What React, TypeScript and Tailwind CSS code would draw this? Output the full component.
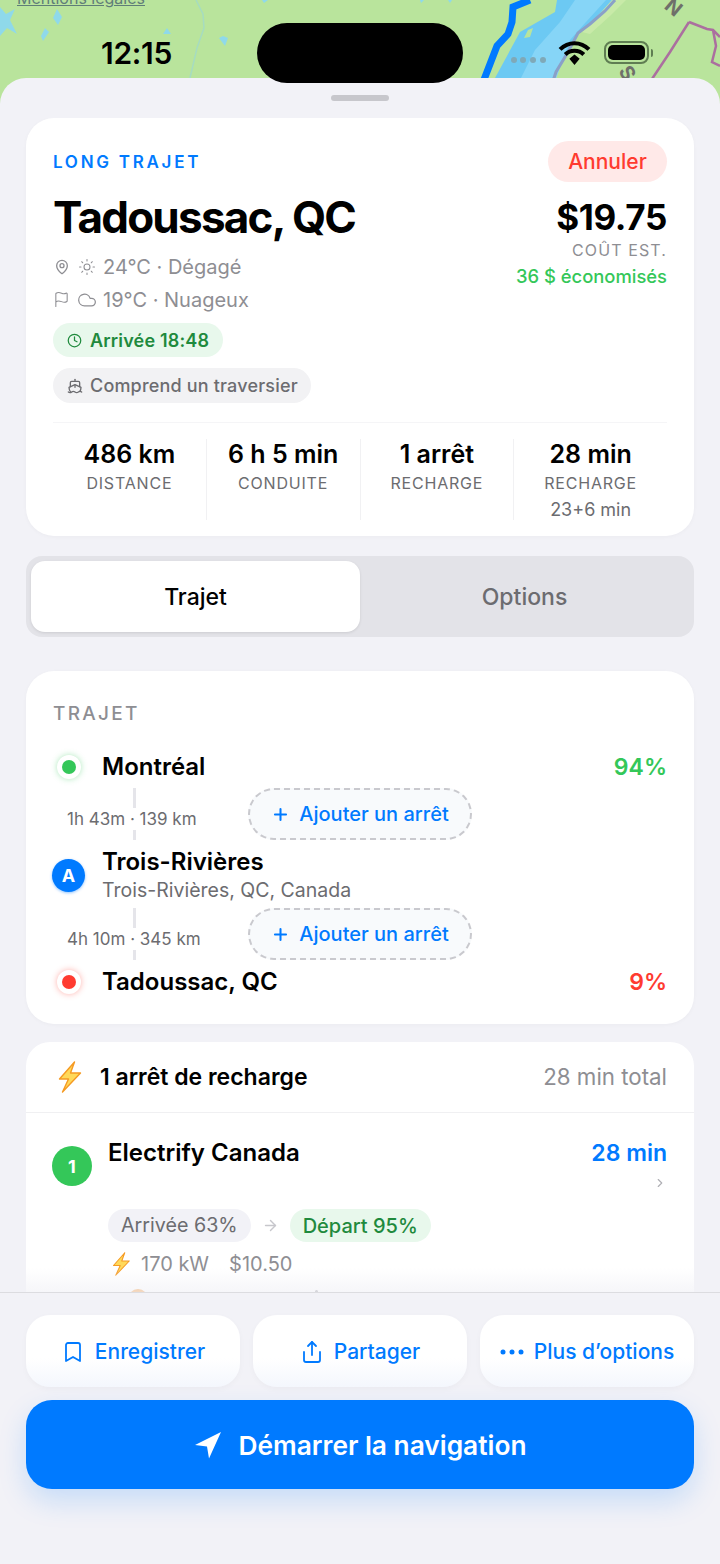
import React from "react";
import { Bookmark, Clock, Cloud, Flag, MapPin, Plus, Share, ChevronRight, ArrowRight, Sun, Ship } from "lucide-react";

const MapBackdrop = () => (
  <svg viewBox="0 0 720 110" className="absolute left-0 top-0 w-[720px] h-[110px]">
    <rect width="720" height="110" fill="#b9e49c" />
    <path d="M0 7 L6 14 L15 9 L10 20 L17 34 L7 28 L0 36Z M57 9 L62 17 L58 25 L53 18Z M45 28 L49 32 L43 41 L41 36Z M167 28 L171 34 L163 34Z M223 36 L228 38 L225 46 L219 38Z M262 0 L268 0 L264 3Z M420 0 L424 0 L421 3Z M448 0 L452 0 L450 3Z" fill="#8fd9ea" />
    <path d="M196 0 L203 14 L204 28 L197 48 L190 78" stroke="#a6dcc0" strokeWidth="1.5" fill="none" />
    <path d="M557 0 H614 L592 22 L578 32 L565 55 L550 90 H485 L495 78 L520 32 L555 12Z" fill="#6cc9f3" />
    <path d="M575 0 H606 L586 22 L570 40 L552 90 H515 L535 50 L560 22Z" fill="#86d5f7" />
    <path d="M533 28 L528 30 L524 38 L530 37Z" fill="#b9e49c" />
    <path d="M612 0 H626 L610 16 L590 34 L582 32 L594 20Z" fill="#c8eaa8" />
    <path d="M615 0 L605 11 L590 24 L578 33 L568 52 L556 72 L550 90" stroke="#8aa0c8" strokeWidth="3" fill="none" />
    <path d="M530 0 L513 7 L512 22 L508 34 L497 46 L480 90" stroke="#007aff" strokeWidth="7" fill="none" />
    <path d="M689 22 L670 52 L650 82 M689 22 L707 29 L713 30 L720 37 M713 30 L716 46 L712 62 L720 66" stroke="#ab6f9f" strokeWidth="2.5" fill="none" />
    <g fill="#7fa9b8">
      <circle cx="514" cy="60" r="3" />
      <circle cx="523" cy="60" r="3" />
      <circle cx="533" cy="60" r="3" />
      <circle cx="543" cy="60" r="3" />
    </g>
    <text x="666" y="14" transform="rotate(40 673 7)" fontFamily="Inter, sans-serif" fontSize="20" fontWeight="700" fill="#6f6f6a">N</text>
    <text x="622" y="80" transform="rotate(60 628 72)" fontFamily="Inter, sans-serif" fontSize="20" fontWeight="700" fill="#6f6f6a">S</text>
  </svg>
);

const Bolt = ({ className }: { className: string }) => (
  <svg viewBox="0 0 24 32" className={className}>
    <path d="M17 1 L2 18 H11 L5 31 L23 12 H13 Z" fill="#ffd95a" stroke="#f59a23" strokeWidth="1.4" strokeLinejoin="round" />
  </svg>
);

const Stat = ({ value, label, sub, last }: { value: string; label: string; sub?: string; last?: boolean }) => (
  <div className={`flex-1 h-[81px] flex flex-col items-center ${last ? "" : "border-r border-[#f1f1f3]"}`}>
    <div className="mt-[1px] text-[25px] leading-[29px] font-semibold text-black">{value}</div>
    <div className="mt-[4px] text-[16px] leading-[20px] tracking-[0.05em] text-[#6c6c70]">{label}</div>
    {sub && <div className="mt-[7px] text-[18px] leading-[20px] text-[#6c6c70]">{sub}</div>}
  </div>
);

const AddStop = () => (
  <button className="w-[224px] h-[52px] rounded-full border-2 border-dashed border-[#c9c9ce] bg-[#f8fafc] flex items-center justify-center gap-[9px] text-[#007aff] text-[20px] font-medium">
    <Plus size={19} strokeWidth={2.6} />
    Ajouter un arrêt
  </button>
);

const Leg = ({ text, className }: { text: string; className: string }) => (
  <div className={`relative flex items-center h-[52px] ml-[14px] ${className}`}>
    <div className="absolute left-[66px] top-0 h-[52px] w-[3px] bg-[#e5e5ea]" />
    <div className="relative w-[181px] pt-[9px]">
      <span className="relative bg-white py-[1px] text-[17px] leading-[20px] text-[#6c6c70]">{text}</span>
    </div>
    <AddStop />
  </div>
);

const RouteDot = ({ dotClass, glowClass }: { dotClass: string; glowClass: string }) => (
  <div className={`ml-[4px] w-[24px] h-[24px] rounded-full bg-white flex items-center justify-center ${glowClass}`}>
    <div className={`w-[14px] h-[14px] rounded-full ${dotClass}`} />
  </div>
);

const ActionBtn = ({ icon, label }: { icon: React.ReactNode; label: string }) => (
  <button className="flex-1 h-[72px] rounded-[24px] bg-gradient-to-b from-white from-60% to-[#f4f7fd] flex items-center justify-center gap-[10px] pt-[2px] text-[#007aff] text-[21px] font-medium shadow-[0_2px_6px_rgba(0,0,0,0.03)]">
    {icon}
    {label}
  </button>
);

export default function App() {
  return (
    <div className="relative w-[720px] h-[1564px] overflow-hidden bg-[#f2f2f7] font-['Inter',sans-serif]">
      <MapBackdrop />
      <div className="absolute left-[17px] top-[-11px] text-[16px] leading-[18px] text-[#5f7d78] underline">Mentions légales</div>

      <div className="relative mt-[78px] h-[1486px] rounded-t-[26px] bg-[#f2f2f7] flex flex-col">
        <div className="h-[40px] flex justify-center pt-[17px] shrink-0">
          <div className="w-[58px] h-[6px] rounded-full bg-[#c7c7cc]" />
        </div>

        <div className="relative flex-1 min-h-0 overflow-hidden px-[26px]">
          <section className="h-[418px] rounded-[28px] bg-white px-[27px] pt-[23px] shadow-[0_1px_4px_rgba(0,0,0,0.03)]">
            <div className="flex justify-between">
              <div>
                <div className="mt-[11px] text-[17px] leading-[20px] font-semibold tracking-[0.16em] text-[#007aff]">LONG TRAJET</div>
                <h1 className="mt-[18px] text-[44px] leading-[54px] font-bold tracking-[-0.04em] text-black">Tadoussac, QC</h1>
                <div className="mt-[6px] flex items-center h-[33px] text-[20px] text-[#8e8e93]">
                  <MapPin size={16} className="ml-[1px] mr-[8px]" />
                  <Sun size={18} strokeWidth={1.4} className="mr-[7px]" />
                  24°C · Dégagé
                </div>
                <div className="flex items-center h-[33px] text-[20px] text-[#8e8e93]">
                  <Flag size={17} strokeWidth={1.5} className="mr-[7px]" />
                  <Cloud size={20} strokeWidth={1.5} className="mr-[6px]" />
                  19°C · Nuageux
                </div>
              </div>
              <div className="flex flex-col items-end">
                <button className="w-[119px] h-[41px] rounded-full bg-[#ffe9e8] text-[#ff3b30] text-[21px] font-medium">Annuler</button>
                <div className="mt-[14px] text-[35px] leading-[42px] font-bold tracking-[-0.01em] text-black">$19.75</div>
                <div className="mt-[2px] text-[16px] leading-[20px] tracking-[0.07em] text-[#8e8e93]">COÛT EST.</div>
                <div className="mt-[5px] text-[18.4px] leading-[22px] font-medium text-[#34c759]">36 $ économisés</div>
              </div>
            </div>
            <div className="mt-[7px] inline-flex items-center gap-[8px] h-[34px] px-[14px] rounded-full bg-[#e8f8ec] text-[18px] font-semibold tracking-[0.01em] text-[#1f8a3d] align-top">
              <Clock size={15} />
              Arrivée 18:48
            </div>
            <div className="mt-[11px]">
              <div className="inline-flex items-center gap-[7px] h-[35px] pl-[14px] pr-[13px] rounded-full bg-[#f2f2f4] text-[18px] font-medium tracking-[0.01em] text-[#6c6c70]">
                <Ship size={16} />
                Comprend un traversier
              </div>
            </div>
            <div className="mt-[19px] border-t border-[#f5f5f7] pt-[16px] flex">
              <Stat value="486 km" label="DISTANCE" />
              <Stat value="6 h 5 min" label="CONDUITE" />
              <Stat value="1 arrêt" label="RECHARGE" />
              <Stat value="28 min" label="RECHARGE" sub="23+6 min" last />
            </div>
          </section>

          <div className="mt-[20px] h-[81px] rounded-[16px] bg-[#e3e3e8] p-[5px] flex">
            <div className="w-[329px] pt-[2px] rounded-[14px] bg-white shadow-[0_1px_3px_rgba(0,0,0,0.1)] flex items-center justify-center text-[23px] font-medium text-black">Trajet</div>
            <div className="flex-1 pt-[2px] flex items-center justify-center text-[23px] font-medium text-[#6c6c70]">Options</div>
          </div>

          <section className="mt-[34px] h-[353px] rounded-[28px] bg-white px-[27px] pt-[33px] shadow-[0_1px_4px_rgba(0,0,0,0.03)]">
            <div className="text-[19px] leading-[20px] font-medium tracking-[0.12em] text-[#8e8e93]">TRAJET</div>
            <div className="mt-[27px] flex items-center h-[32px]">
              <RouteDot dotClass="bg-[#34c759]" glowClass="shadow-[0_0_6px_rgba(52,199,89,0.4)]" />
              <div className="ml-[21px] text-[24px] font-semibold text-black">Montréal</div>
              <div className="ml-auto text-[23px] font-semibold text-[#34c759]">94%</div>
            </div>
            <Leg text="1h 43m · 139 km" className="mt-[5px]" />
            <div className="mt-[2px] flex items-center h-[66px]">
              <div className="-ml-[1px] w-[33px] h-[33px] rounded-full bg-[#007aff] shadow-[0_1px_3px_rgba(0,122,255,0.45)] flex items-center justify-center text-white text-[18px] font-bold">A</div>
              <div className="ml-[17px]">
                <div className="text-[24px] leading-[30px] font-semibold text-black">Trois-Rivières</div>
                <div className="text-[19.5px] leading-[26px] text-[#6c6c70]">Trois-Rivières, QC, Canada</div>
              </div>
            </div>
            <Leg text="4h 10m · 345 km" className="mt-0" />
            <div className="mt-[1px] flex items-center h-[42px]">
              <RouteDot dotClass="bg-[#ff3b30]" glowClass="shadow-[0_0_6px_rgba(255,59,48,0.4)]" />
              <div className="ml-[21px] text-[24px] font-semibold text-black">Tadoussac, QC</div>
              <div className="ml-auto text-[23px] font-semibold text-[#ff3b30]">9%</div>
            </div>
          </section>

          <section className="mt-[18px] h-[300px] rounded-t-[24px] bg-white overflow-hidden">
            <div className="h-[71px] pl-[31px] pr-[27px] flex items-center border-b border-[#f0f0f2]">
              <Bolt className="w-[25px] h-[32px]" />
              <div className="ml-[18px] text-[23px] font-semibold text-black">1 arrêt de recharge</div>
              <div className="ml-auto text-[22.3px] text-[#8e8e93]">28 min total</div>
            </div>
            <div className="pl-[26px] pr-[27px] pt-[25px]">
              <div className="flex">
                <div className="mt-[8px] w-[40px] h-[40px] rounded-full bg-[#34c759] flex items-center justify-center text-white text-[18px] font-bold">1</div>
                <div className="ml-[16px] text-[24px] leading-[30px] font-semibold text-black">Electrify Canada</div>
                <div className="ml-auto flex flex-col items-end">
                  <div className="text-[23px] leading-[30px] font-semibold text-[#007aff]">28 min</div>
                  <ChevronRight size={14} className="mt-[8px] text-[#b0b0b5]" />
                </div>
              </div>
              <div className="ml-[56px] mt-[19px] flex items-center">
                <div className="h-[33px] px-[13px] rounded-full bg-[#f2f2f7] flex items-center text-[19.7px] text-[#6c6c70]">Arrivée 63%</div>
                <ArrowRight size={17} className="mx-[11px] text-[#c7c7cc]" />
                <div className="h-[33px] px-[13px] rounded-full bg-[#e8f8ec] flex items-center text-[20px] font-medium text-[#1f8a3d]">Départ 95%</div>
              </div>
              <div className="ml-[56px] mt-[8px] flex items-center h-[28px] text-[20px] text-[#8e8e93]">
                <Bolt className="w-[20px] h-[24px] ml-[3px] mr-[10px]" />
                170 kW
                <span className="ml-[20px]">$10.50</span>
              </div>
              <div className="ml-[76px] mt-[11px] flex items-start">
                <div className="w-[20px] h-[20px] rounded-full bg-[#f5a04a]" />
                <div className="ml-[167px] mt-[1px] w-[3px] h-[8px] rounded-full bg-[#9a9a9f]" />
              </div>
            </div>
          </section>
          <div className="absolute left-0 right-0 bottom-0 h-[24px] bg-gradient-to-b from-transparent to-[#f2f2f7]/70" />
        </div>

        <footer className="h-[272px] shrink-0 border-t border-[#dcdce0] bg-[#f2f2f7] px-[26px] pt-[22px]">
          <div className="flex gap-[13px]">
            <ActionBtn icon={<Bookmark size={24} strokeWidth={1.8} />} label="Enregistrer" />
            <ActionBtn icon={<Share size={24} strokeWidth={1.8} />} label="Partager" />
            <ActionBtn
              icon={
                <svg viewBox="0 0 24 6" className="w-[24px] h-[6px] fill-[#007aff]">
                  <circle cx="3" cy="3" r="2.5" />
                  <circle cx="12" cy="3" r="2.5" />
                  <circle cx="21" cy="3" r="2.5" />
                </svg>
              }
              label="Plus d’options"
            />
          </div>
          <button className="mt-[13px] w-full h-[89px] rounded-[26px] bg-[#007aff] shadow-[0_12px_28px_rgba(0,122,255,0.18)] flex items-center justify-center gap-[17px] pt-[2px] text-white text-[26.3px] font-semibold">
            <svg viewBox="0 0 28 28" className="w-[28px] h-[28px] fill-white -mt-[2px]">
              <path d="M27 1 L1 14 L13 15.5 L15 27.5 Z" />
            </svg>
            Démarrer la navigation
          </button>
        </footer>
      </div>

      <div className="absolute left-[101px] top-[35px] text-[30px] leading-[36px] font-semibold tracking-[-0.01em] text-black">12:15</div>
      <div className="absolute left-[257px] top-[23px] w-[206px] h-[60px] rounded-full bg-black" />
      <svg viewBox="0 0 32 24" className="absolute left-[558px] top-[40px] w-[33px] h-[25px]">
        <path d="M2 9 C10 1 22 1 30 9 M7 14 C12 9 20 9 25 14" stroke="#000" strokeWidth="4" fill="none" />
        <path d="M11 18 L16 14 L21 18 L16 24Z" fill="#000" />
      </svg>
      <div className="absolute left-[604px] top-[41px] w-[45px] h-[23px] rounded-[8px] border-2 border-[#5f7d52] p-[2px]">
        <div className="w-full h-full rounded-[5px] bg-black" />
      </div>
      <div className="absolute left-[651px] top-[49px] w-[2px] h-[8px] rounded-r-full bg-[#5f7d52]" />
    </div>
  );
}
